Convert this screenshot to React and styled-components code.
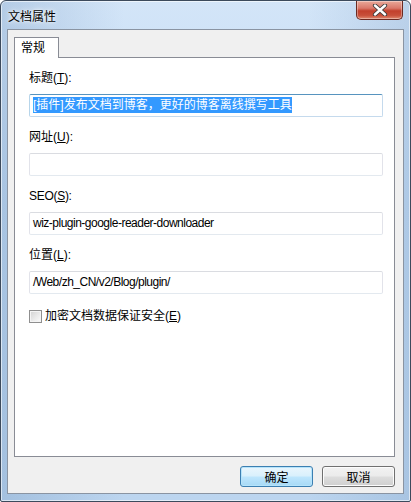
import styled, { createGlobalStyle } from "styled-components";

const GlobalStyle = createGlobalStyle`
  html, body {
    margin: 0;
    padding: 0;
    background: #ffffff;
  }
  body {
    font-family: "Liberation Sans", "Noto Sans CJK SC", sans-serif;
    font-size: 12px;
    color: #000;
  }
`;

function Key(props) {
  return (
    <span>
      (<u>{props.k}</u>)
    </span>
  );
}

function App() {
  return (
    <Window>
      <GlobalStyle />
      <TitleBar>
        <Title>文档属性</Title>
        <CloseButton>
          <svg width="16" height="12" viewBox="0 0 16 12">
            <path
              d="M3 1.5 L13 10.5 M13 1.5 L3 10.5"
              stroke="#3b3b3b"
              strokeWidth="4.2"
              strokeLinecap="round"
            />
            <path
              d="M3 1.5 L13 10.5 M13 1.5 L3 10.5"
              stroke="#ffffff"
              strokeWidth="2.4"
              strokeLinecap="round"
            />
          </svg>
        </CloseButton>
      </TitleBar>
      <Client>
        <TabStrip>
          <Tab>常规</Tab>
        </TabStrip>
        <Panel>
          <Field>
            <Label>
              标题<Key k="T" />:
            </Label>
            <Input focused>
              <Selected>[插件]发布文档到博客，更好的博客离线撰写工具</Selected>
            </Input>
          </Field>
          <Field>
            <Label>
              网址<Key k="U" />:
            </Label>
            <Input />
          </Field>
          <Field>
            <Label latin>
              SEO<Key k="S" />:
            </Label>
            <Input latin>wiz-plugin-google-reader-downloader</Input>
          </Field>
          <Field>
            <Label>
              位置<Key k="L" />:
            </Label>
            <Input latin>/Web/zh_CN/v2/Blog/plugin/</Input>
          </Field>
          <CheckRow>
            <CheckBox />
            <span>
              加密文档数据保证安全<Key k="E" />
            </span>
          </CheckRow>
        </Panel>
        <Footer>
          <Button primary>确定</Button>
          <Button>取消</Button>
        </Footer>
      </Client>
    </Window>
  );
}

export default App;

const Window = styled.div`
  width: 411px;
  height: 502px;
  box-sizing: border-box;
  border: 1px solid #3c4a5c;
  border-radius: 6px 6px 2px 2px;
  background:
    linear-gradient(90deg, rgba(90, 130, 175, 0.25) 0%, rgba(255, 255, 255, 0) 30%, rgba(255, 255, 255, 0) 75%, rgba(90, 130, 175, 0.2) 100%),
    linear-gradient(180deg, #d3e5f8 0%, #c2daf3 40%, #bcd5ef 100%);
  display: flex;
  flex-direction: column;
  box-shadow: inset 0 0 0 1px rgba(255, 255, 255, 0.6);
`;

const TitleBar = styled.div`
  height: 28px;
  display: flex;
  align-items: flex-start;
  justify-content: space-between;
  padding: 0 6px 0 7px;
`;

const Title = styled.div`
  font-family: "Noto Sans CJK SC", sans-serif;
  font-size: 12px;
  line-height: 14px;
  margin-top: 8px;
  color: #000;
  text-shadow: 0 0 6px rgba(255, 255, 255, 0.95), 0 0 3px rgba(255, 255, 255, 0.95);
`;

const CloseButton = styled.div`
  width: 47px;
  height: 19px;
  box-sizing: border-box;
  border: 1px solid #6b2a22;
  border-top: none;
  border-radius: 0 0 5px 5px;
  background: linear-gradient(180deg, #e9a99a 0%, #d9786a 40%, #c2402c 55%, #c8503a 80%, #e08a70 100%);
  box-shadow: inset 0 0 0 1px rgba(255, 255, 255, 0.35);
  display: flex;
  align-items: center;
  justify-content: center;
  margin-right: 1px;
`;

const Client = styled.div`
  flex: 1;
  margin: 0 6px 7px 6px;
  border: 1px solid #8a94a2;
  background: #f0f0f0;
  display: flex;
  flex-direction: column;
  padding: 7px 8px 0 6px;
`;

const TabStrip = styled.div`
  display: flex;
  height: 20px;
`;

const Tab = styled.div`
  width: 45px;
  height: 21px;
  box-sizing: border-box;
  border: 1px solid #898c95;
  border-bottom: none;
  background: #ffffff;
  font-family: "Noto Sans CJK SC", sans-serif;
  font-size: 12px;
  line-height: 18px;
  padding-left: 6px;
  position: relative;
  z-index: 1;
`;

const Panel = styled.div`
  height: 400px;
  box-sizing: border-box;
  border: 1px solid #898c95;
  background: #ffffff;
  padding: 12px 11px 0 14px;
  display: flex;
  flex-direction: column;
  gap: 12px;
`;

const Field = styled.div`
  display: flex;
  flex-direction: column;
  gap: 8px;
`;

const Label = styled.div`
  font-family: "Liberation Sans", "Noto Sans CJK SC", sans-serif;
  font-size: 12px;
  line-height: 16px;
  height: 16px;
  letter-spacing: ${(p) => (p.latin ? "-0.3px" : "0")};
`;

const Input = styled.div`
  height: 23px;
  box-sizing: border-box;
  border: 1px solid;
  border-color: ${(p) =>
    p.focused ? "#5794bf #c5daed #c5daed #b7d5ea" : "#dadce1 #e2e3ea #e3e9ef #e2e3ea"};
  border-radius: 2px;
  background: #ffffff;
  padding: 0 3px;
  font-family: "Liberation Sans", "Noto Sans CJK SC", sans-serif;
  font-size: 12px;
  line-height: 21px;
  letter-spacing: ${(p) => (p.latin ? "-0.5px" : "0")};
  white-space: nowrap;
  overflow: hidden;
`;

const Selected = styled.span`
  background: #3399ff;
  color: #ffffff;
  padding: 1px 0;
`;

const CheckRow = styled.div`
  display: flex;
  align-items: center;
  gap: 3px;
  margin-top: 2px;
  font-family: "Liberation Sans", "Noto Sans CJK SC", sans-serif;
  font-size: 12px;
  line-height: 16px;
`;

const CheckBox = styled.div`
  width: 13px;
  height: 13px;
  box-sizing: border-box;
  border: 1px solid #8f8f8f;
  background: linear-gradient(135deg, #d2d2d2 0%, #ececec 60%, #fbfbfb 100%);
  box-shadow: inset 0 0 0 1px #f4f4f4;
`;

const Footer = styled.div`
  flex: 1;
  display: flex;
  justify-content: flex-end;
  align-items: flex-start;
  gap: 9px;
  padding-top: 9px;
`;

const Button = styled.div`
  width: 73px;
  height: 21px;
  box-sizing: border-box;
  border: 1px solid ${(p) => (p.primary ? "#3c7fb1" : "#707070")};
  border-radius: 3px;
  background: ${(p) =>
    p.primary
      ? "linear-gradient(180deg, #eaf6fd 0%, #d9f0fc 48%, #bee6fd 52%, #a7d9f5 100%)"
      : "linear-gradient(180deg, #f2f2f2 0%, #ebebeb 48%, #dddddd 52%, #cfcfcf 100%)"};
  box-shadow: inset 0 0 0 1px ${(p) => (p.primary ? "#b6e4fb" : "#fcfcfc")};
  display: flex;
  align-items: center;
  justify-content: center;
  font-family: "Noto Sans CJK SC", sans-serif;
  font-size: 12px;
  line-height: 14px;
`;
